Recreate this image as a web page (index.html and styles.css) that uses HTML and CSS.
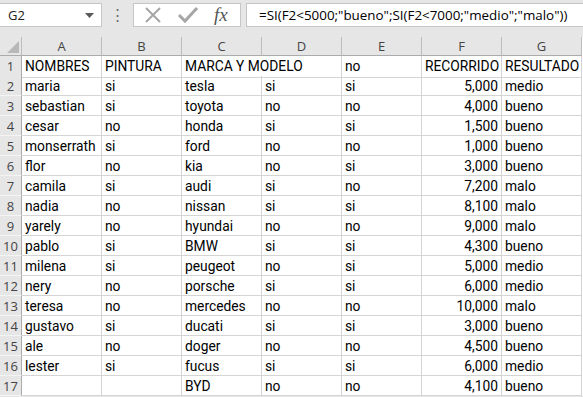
FILE: index.html
```html
<!DOCTYPE html>
<html>
<head>
    <meta charset="UTF-8">
    <title>Recorrido</title>
    <link rel="stylesheet" href="styles.css">
</head>
<body>
    <!-- barra de formulas -->
    <div class="toolbar">
        <div class="namebox">
            <span>G2</span>
            <svg class="drop" width="9" height="5" viewBox="0 0 9 5"><path d="M0 0h9L4.5 5z" fill="#595959"/></svg>
        </div>
        <div class="dots">⋮</div>
        <div class="btns">
            <svg width="20" height="20" viewBox="0 0 20 20"><path d="M3 3L17 17M17 3L3 17" stroke="#a6a6a6" stroke-width="2" fill="none"/></svg>
            <svg width="22" height="20" viewBox="0 0 22 20"><path d="M2 10l6 6L20 3" stroke="#a6a6a6" stroke-width="3" fill="none"/></svg>
            <span class="fx">fx</span>
        </div>
        <div class="formula">=SI(F2&lt;5000;"bueno";SI(F2&lt;7000;"medio";"malo"))</div>
    </div>

    <!-- hoja -->
    <div class="sheet" id="sheet">
        <div class="row head">
            <div class="corner"></div>
            <div class="col">A</div><div class="col">B</div><div class="col">C</div><div class="col">D</div>
            <div class="col">E</div><div class="col">F</div><div class="col">G</div>
        </div>
    </div>

    <script>
        const data = [
            ['NOMBRES','PINTURA','MARCA Y MODELO','','no','RECORRIDO','RESULTADO'],
            ['maria','si','tesla','si','si','5,000','medio'],
            ['sebastian','si','toyota','no','no','4,000','bueno'],
            ['cesar','no','honda','si','si','1,500','bueno'],
            ['monserrath','si','ford','no','no','1,000','bueno'],
            ['flor','no','kia','no','si','3,000','bueno'],
            ['camila','si','audi','si','no','7,200','malo'],
            ['nadia','no','nissan','si','si','8,100','malo'],
            ['yarely','no','hyundai','no','no','9,000','malo'],
            ['pablo','si','BMW','si','si','4,300','bueno'],
            ['milena','si','peugeot','no','si','5,000','medio'],
            ['nery','no','porsche','si','si','6,000','medio'],
            ['teresa','no','mercedes','no','no','10,000','malo'],
            ['gustavo','si','ducati','si','si','3,000','bueno'],
            ['ale','no','doger','no','no','4,500','bueno'],
            ['lester','si','fucus','si','si','6,000','medio'],
            ['','','BYD','no','no','4,100','bueno']
        ];
        const sheet = document.getElementById('sheet');
        data.forEach((r, i) => {
            const row = document.createElement('div');
            row.className = 'row';
            let html = `<div class="num">${i + 1}</div>`;
            r.forEach((v, j) => {
                let cls = 'cell';
                if (j == 5 && i > 0) cls += ' right';
                if (i == 0 && j == 2) cls += ' spill';
                html += `<div class="${cls}">${v}</div>`;
            });
            row.innerHTML = html;
            sheet.appendChild(row);
        });
    </script>
</body>
</html>
```

FILE: styles.css
```css
:root{
    --grey: #e6e6e6;
    --grid: #d4d4d4;
    --headLine: #bdbdbd;
}

body{
    margin: 0;
    background: var(--grey);
    font-family: Roboto, "Liberation Sans", sans-serif;
    overflow: hidden;
}

/*---------- barra de formulas ----------*/
.toolbar{
    display: flex;
    align-items: center;
    height: 28px;
    padding-bottom: 9px;
    font-family: "Open Sans", "Liberation Sans", sans-serif;
}
.namebox{
    display: flex;
    align-items: center;
    justify-content: space-between;
    box-sizing: border-box;
    width: 102px;
    height: 24px;
    margin-top: 2px;
    padding: 0 7px 0 8px;
    background: white;
    border: 1px solid #c6c6c6;
    border-left: none;
    font-size: 13px;
    color: #222;
}
.dots{
    width: 31px;
    text-align: center;
    color: #666;
    font-size: 15px;
}
.btns{
    display: flex;
    align-items: center;
    gap: 14px;
    box-sizing: border-box;
    width: 108px;
    height: 24px;
    margin-top: 2px;
    padding-left: 9px;
    background: white;
    border: 1px solid #c6c6c6;
}
.fx{
    font-family: "Liberation Serif", serif;
    font-style: italic;
    font-size: 19px;
    color: #555;
    margin-left: 1px;
}
.formula{
    flex: 1;
    box-sizing: border-box;
    height: 24px;
    margin: 2px 0 0 5px;
    padding: 2px 0 0 12px;
    background: white;
    border: 1px solid #c6c6c6;
    border-right: none;
    font-size: 13.4px;
    color: #000;
    white-space: nowrap;
}

/*---------- hoja ----------*/
.sheet{
    background: white;
}
.row{
    display: grid;
    grid-template-columns: 22px repeat(7, 80px);
    height: 20px;
}
.row > div{
    box-sizing: border-box;
    border-right: 1px solid var(--grid);
    border-bottom: 1px solid var(--grid);
    white-space: nowrap;
    overflow: hidden;
}
.row.head{
    height: 19px;
}
.row.head > div{
    background: var(--grey);
    border-right-color: var(--headLine);
    border-bottom-color: #ababab;
    text-align: center;
    font-family: "Open Sans", "Liberation Sans", sans-serif;
    font-size: 13px;
    line-height: 18px;
    color: #444;
}
.corner{
    position: relative;
}
.corner::after{ /* triangulo de seleccionar todo */
    content: "";
    position: absolute;
    right: 2px;
    bottom: 2px;
    border-left: 12px solid transparent;
    border-bottom: 12px solid #b8b8b8;
}
.num{
    background: var(--grey);
    border-right-color: #ababab !important;
    border-bottom-color: #f4f4f4 !important;
    text-align: center;
    font-family: "Open Sans", "Liberation Sans", sans-serif;
    font-size: 13px;
    line-height: 20px;
    color: #444;
}
.cell{
    padding: 0 3px;
    font-size: 13.8px;
    line-height: 21px;
    color: #000;
}
.cell.right{text-align: right;}
.cell.spill{
    overflow: visible;
    border-right-color: transparent !important;
}
```
